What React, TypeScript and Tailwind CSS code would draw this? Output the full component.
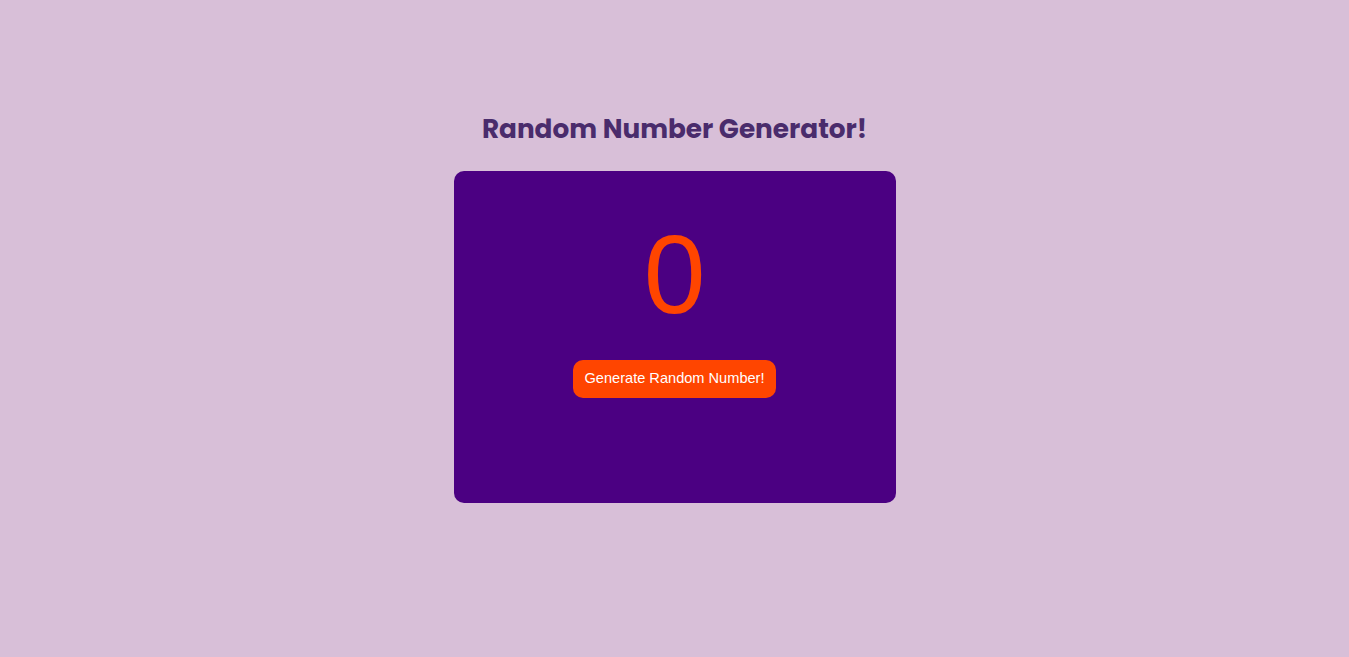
import React, { useState } from "react";

export default function App() {
  const [n, setN] = useState(0);
  return (
    <div className="min-h-[657px] w-full bg-[#d8bfd8] flex flex-col items-center pt-[112px]">
      <h1 className="text-[26.3px] leading-[34px] font-bold text-[#4a2c6c] [font-family:Poppins,'DejaVu_Sans',sans-serif]">
        Random Number Generator!
      </h1>
      <div className="mt-[25px] w-[442px] h-[332px] bg-[#4b0082] rounded-[10px] flex flex-col items-center pt-[35px]">
        <div className="text-[111px] leading-[138px] text-[#ff4500] [font-family:'Liberation_Sans',Arial,sans-serif]">
          {n}
        </div>
        <button
          onClick={() => setN(Math.floor(Math.random() * 100))}
          className="mt-[16px] h-[38px] px-[11px] rounded-[10px] bg-[#ff4500] text-white text-[14.6px] [font-family:'Liberation_Sans',Arial,sans-serif]"
        >
          Generate Random Number!
        </button>
      </div>
    </div>
  );
}
